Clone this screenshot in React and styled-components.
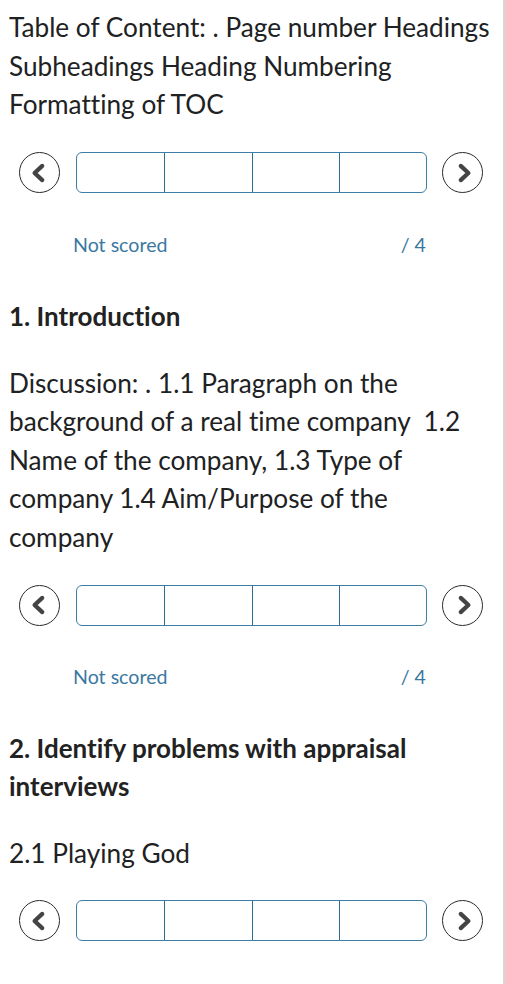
import React from "react"
import styled, { createGlobalStyle } from "styled-components"

const GlobalStyle = createGlobalStyle`
  html, body {
    margin: 0;
    padding: 0;
    background: #ffffff;
  }
  body {
    font-family: Lato, "Liberation Sans", sans-serif;
    font-variant-ligatures: none;
    color: #202122;
  }
`

const Page = styled.div`
  width: 505px;
  min-height: 984px;
  box-sizing: border-box;
  border-right: 2px solid #d6d6d6;
  padding: 8px 10px 0 9px;
`

const Text = styled.p`
  margin: ${(p) => p.$top || 0}px 0 0;
  font-size: 26.2px;
  line-height: 38.5px;
`

const Heading = styled.h2`
  margin: ${(p) => p.$top || 0}px 0 0;
  font-size: 26px;
  font-weight: 700;
  line-height: 38px;
  color: #222;
`

const SliderRow = styled.div`
  display: flex;
  align-items: center;
  height: 42px;
  margin-top: ${(p) => p.$top || 28}px;
  padding-left: 10px;
`

const RoundButton = styled.button`
  width: 41px;
  height: 41px;
  border-radius: 50%;
  border: 1.6px solid #2a2a2a;
  background: #fff;
  padding: 0;
  display: flex;
  align-items: center;
  justify-content: center;
  flex-shrink: 0;
`

const Scale = styled.div`
  display: grid;
  grid-template-columns: repeat(4, 1fr);
  width: 351px;
  height: 41px;
  box-sizing: border-box;
  border: 1.5px solid #3d7ea4;
  border-radius: 6px;
  margin: 0 15px 0 16px;
  overflow: hidden;
`

const Cell = styled.div`
  border-left: ${(p) => (p.$first ? "none" : "1.5px solid #2c6b92")};
`

const ScoreRow = styled.div`
  display: flex;
  justify-content: space-between;
  width: 353px;
  margin: 39px 0 0 64px;
  font-size: 19.6px;
  line-height: 24px;
  color: #3a78a0;
`

const Chevron = ({ dir }) => (
  <svg width="22" height="22" viewBox="0 0 22 22">
    <path
      d={
        dir === "left"
          ? "M13.25 3.9 L5.6 11 L13.25 18.1"
          : "M8.75 3.9 L16.4 11 L8.75 18.1"
      }
      fill="none"
      stroke="#444444"
      strokeWidth="4.2"
      strokeLinecap="round"
      strokeLinejoin="round"
    />
  </svg>
)

const Slider = ({ top }) => (
  <SliderRow $top={top}>
    <RoundButton aria-label="previous">
      <Chevron dir="left" />
    </RoundButton>
    <Scale>
      {[0, 1, 2, 3].map((i) => (
        <Cell key={i} $first={i === 0} />
      ))}
    </Scale>
    <RoundButton aria-label="next">
      <Chevron dir="right" />
    </RoundButton>
  </SliderRow>
)

const Score = () => (
  <ScoreRow>
    <span>Not scored</span>
    <span>/ 4</span>
  </ScoreRow>
)

export default function App() {
  return (
    <>
      <GlobalStyle />
      <Page>
        <Text>
          Table of Content: . Page number Headings Subheadings Heading Numbering
          Formatting of TOC
        </Text>
        <Slider />
        <Score />
        <Heading $top={40}>1. Introduction</Heading>
        <Text $top={29}>
          Discussion: . 1.1 Paragraph on the background of a real time company&nbsp; 1.2
          Name of the company, 1.3 Type of company 1.4 Aim/Purpose of the company
        </Text>
        <Slider top={28} />
        <Score />
        <Heading $top={40}>
          2. Identify problems with appraisal interviews
        </Heading>
        <Text $top={29}>2.1 Playing God</Text>
        <Slider top={27} />
      </Page>
    </>
  )
}
